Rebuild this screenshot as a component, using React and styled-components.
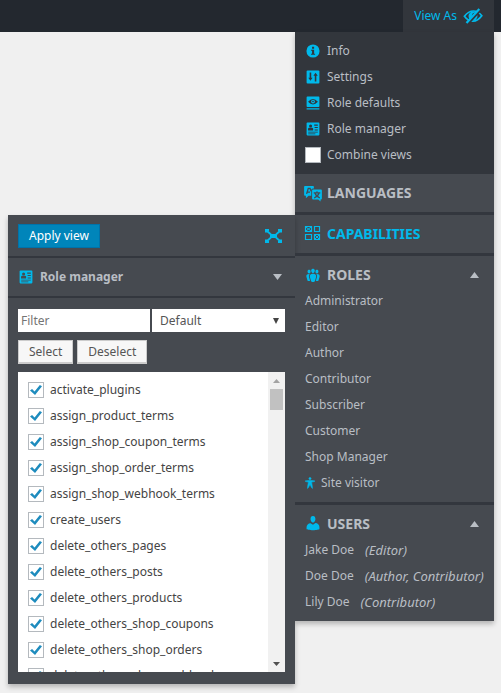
import React from "react";
import styled, { createGlobalStyle, css } from "styled-components";

const color = {
  bar: "#23282f",
  dark: "#32363c",
  panel: "#464a50",
  line: "#33373e",
  text: "#b9bec4",
  accent: "#00b9eb",
  white: "#ffffff",
};

const GlobalStyle = createGlobalStyle`
  *, *::before, *::after { box-sizing: border-box; }
  body {
    margin: 0;
    min-height: 100vh;
    background: #f0f0f0;
    font-family: "Noto Sans", "Open Sans", sans-serif;
    font-size: 12px;
    line-height: 26px;
    color: ${color.text};
  }
  button, input, select { font: inherit; }
`;

const TopBar = styled.header`
  display: flex;
  justify-content: flex-end;
  height: 32px;
  padding-right: 7px;
  background: ${color.bar};
`;

const ViewAsButton = styled.button`
  display: flex;
  align-items: center;
  gap: 6px;
  padding: 0 11px;
  border: 0;
  background: ${color.dark};
  color: ${color.accent};
  white-space: nowrap;
`;

const Main = styled.main`
  display: flex;
  justify-content: flex-end;
  align-items: flex-start;
  padding: 0 7px 72px 8px;
`;

const Menu = styled.nav`
  flex: 0 0 199px;
  min-width: 0;
  background: ${color.panel};
  box-shadow: 0 3px 5px rgba(0, 0, 0, 0.25);
`;

const Section = styled.section`
  position: relative;
  padding: 6px 10px;
  background: ${(p) => (p.$dark ? color.dark : color.panel)};
  border-top: ${(p) => (p.$ruled ? `3px solid ${color.line}` : "0")};
`;

const rowStyle = css`
  display: flex;
  align-items: center;
  gap: ${(p) => p.$gap || 6}px;
  height: 26px;
  white-space: nowrap;
  color: ${color.text};
  text-decoration: none;
`;

const MenuLink = styled.a`
  ${rowStyle}
`;

const MenuLabel = styled.label`
  ${rowStyle}
`;

const HeadingButton = styled.button`
  ${rowStyle}
  width: 100%;
  padding: 0 5px 0 0;
  border: 0;
  background: none;
  text-align: left;
  font-size: ${(p) => (p.$small ? 12 : 14)}px;
  font-weight: 700;
  color: ${(p) => (p.$active ? color.accent : color.text)};
`;

const HeadingText = styled.span`
  flex: 1;
`;

const UserRole = styled.em`
  font-size: 13px;
  font-style: italic;
`;

const Icon = styled.svg`
  flex: none;
  display: block;
  width: ${(p) => p.$w || 16}px;
  height: ${(p) => p.$h || p.$w || 16}px;
  overflow: visible;
  fill: ${(p) => p.$fill || color.accent};
`;

const CheckBox = styled.input.attrs({ type: "checkbox" })`
  flex: none;
  appearance: none;
  display: grid;
  place-items: center;
  width: 16px;
  height: 16px;
  margin: 0;
  border: 1px solid #b4b9be;
  background: ${color.white};
  &:checked::before {
    content: "";
    width: 12px;
    height: 10px;
    background: #1e8cbe;
    clip-path: polygon(0 54%, 17% 40%, 38% 66%, 82% 0, 100% 12%, 42% 100%);
  }
`;

const Flyout = styled.div`
  position: absolute;
  top: 0;
  right: 100%;
  width: 287px;
  background: ${color.panel};
  box-shadow: 0 3px 5px rgba(0, 0, 0, 0.25);
`;

const FlyoutBar = styled.div`
  display: flex;
  align-items: center;
  justify-content: space-between;
  height: ${(p) => p.$height}px;
  padding: 0 13px 0 10px;
  border-bottom: 2px solid ${color.line};
`;

const ApplyButton = styled.button`
  height: 24px;
  padding: 0 10px;
  border: 1px solid #0073aa;
  background: #0085ba;
  color: ${color.white};
  line-height: 20px;
`;

const IconButton = styled.button`
  display: flex;
  padding: 0;
  border: 0;
  background: none;
`;

const FlyoutBody = styled.div`
  display: grid;
  gap: 8px;
  padding: 11px 10px 12px;
`;

const Fields = styled.div`
  display: grid;
  grid-template-columns: 132px 1fr;
  gap: 2px;
`;

const FilterInput = styled.input`
  min-width: 0;
  height: 23px;
  padding: 0 3px;
  border: 0;
  background: ${color.white};
  color: #444;
  &::placeholder { color: #757575; opacity: 1; }
`;

const SelectWrap = styled.div`
  display: grid;
  grid-template-columns: 1fr;
  align-items: center;
  background: ${color.white};
  & > * { grid-area: 1 / 1; }
  & > svg { justify-self: end; margin-right: 6px; pointer-events: none; }
`;

const RoleSelect = styled.select`
  appearance: none;
  width: 100%;
  height: 23px;
  padding: 0 8px;
  border: 0;
  background: transparent;
  color: #555;
  line-height: 20px;
`;

const ButtonRow = styled.div`
  display: flex;
  gap: 4px;
`;

const PlainButton = styled.button`
  height: 24px;
  padding: 0 10px;
  border: 1px solid #ccc;
  border-bottom-width: 2px;
  background: #f7f7f7;
  color: #555;
  line-height: 20px;
`;

const ListBox = styled.div`
  display: flex;
  height: 300px;
  background: ${color.white};
`;

const CapabilityList = styled.ul`
  flex: 1;
  margin: 0;
  padding: 5px 10px;
  list-style: none;
  overflow-y: auto;
  scrollbar-width: none;
`;

const CapabilityLabel = styled.label`
  ${rowStyle}
  color: #444;
`;

const ScrollTrack = styled.div`
  display: flex;
  flex-direction: column;
  align-items: center;
  width: 17px;
  background: #f1f1f1;
`;

const ScrollArrow = styled.div`
  display: grid;
  place-items: center;
  height: 17px;
`;

const ScrollThumb = styled.div`
  width: 13px;
  height: 21px;
  margin-bottom: auto;
  background: #c1c1c1;
`;

const Triangle = ({ down, w = 9, h = 6, fill = color.text }) => (
  <Icon viewBox="0 0 10 8" preserveAspectRatio="none" $w={w} $h={h} $fill={fill} aria-hidden="true">
    <path d={down ? "M0 0H10L5 8Z" : "M0 8H10L5 0Z"} />
  </Icon>
);

const HiddenEyeIcon = () => (
  <Icon viewBox="0 0 20 20" $w={20} aria-hidden="true">
    <path
      d="M1.4 10.3Q5.4 5 10.4 5Q15.4 5 18.8 9.8Q14.8 15.2 10 15.2Q5 15.2 1.4 10.3Z"
      fill="none"
      stroke={color.accent}
      strokeWidth="1.7"
    />
    <path d="M10 5.6A4.5 4.5 0 1 0 10 14.6A4.5 4.5 0 1 0 10 5.6Z" />
    <path d="M9.4 9.8Q9.7 7.5 11.8 7.2" fill="none" stroke={color.dark} strokeWidth="1.3" />
    <path d="M4.8 17.6L17 3.9" stroke={color.dark} strokeWidth="3" />
    <path d="M3.5 17L16.3 3" stroke={color.accent} strokeWidth="2.2" />
  </Icon>
);

const InfoIcon = () => (
  <Icon viewBox="0 0 20 20" aria-hidden="true">
    <circle cx="10" cy="10" r="8.2" />
    <path d="M8.8 4.8h2.6v2.4H8.8zM7.6 8.4h3.8v5h1.2v1.4H7.6v-1.4h1.2V9.8H7.6z" fill={color.dark} />
  </Icon>
);

const SettingsIcon = () => (
  <Icon viewBox="0 0 20 20" aria-hidden="true">
    <path d="M3.2 2h13.6q1.2 0 1.2 1.2v13.6q0 1.2-1.2 1.2H3.2Q2 18 2 16.8V3.2Q2 2 3.2 2z" />
    <path d="M5.8 4.5h2V11h1.7L6.8 14.8 4.1 11h1.7zM12.2 15.5h2V8.5h1.7L13.2 4.7 10.5 8.5h1.7z" fill={color.dark} />
  </Icon>
);

const DefaultsIcon = () => (
  <Icon viewBox="0 0 20 20" aria-hidden="true">
    <path d="M3 2h14q1 0 1 1v11q0 1-1 1H3q-1 0-1-1V3q0-1 1-1zM2 16.6h16V18H2z" />
    <path d="M3.8 8.5Q10 1.6 16.2 8.5Q10 15 3.8 8.5z" fill={color.dark} />
    <circle cx="10" cy="8.2" r="2.4" />
    <circle cx="10" cy="8.2" r="1" fill={color.dark} />
  </Icon>
);

const ManagerIcon = ({ bg = color.dark }) => (
  <Icon viewBox="0 0 20 20" aria-hidden="true">
    <path d="M3 2h14q1 0 1 1v14q0 1-1 1H3q-1 0-1-1V3q0-1 1-1z" />
    <g fill={bg}>
      <circle cx="7" cy="6.2" r="1.9" />
      <path d="M3.8 11.8V9.6q0-1.2 1.6-1.2h3.2q1.6 0 1.6 1.2v2.2z" />
      <path d="M11.5 4.5H16v1.3h-4.5zM12 7.5h4v1.3h-4zM12 10.5h4v1.3h-4zM4 13.3h12v1.2H4zM4 15.6h9v1H4z" />
    </g>
  </Icon>
);

const LanguagesIcon = () => (
  <Icon viewBox="1 0 18 18" aria-hidden="true">
    <path d="M1 1h9q1 0 1 1v2h-1Q8 4 8 6v6H5l-3 3v-3H1q-1 0-1-1V2q0-1 1-1z" />
    <path d="M2.8 10L4.7 3.8h2L8 7M3.6 8h3" fill="none" stroke={color.panel} strokeWidth="1.5" />
    <path d="M10 5.2h9q1 0 1 1v9q0 1-1 1h-.5v2.3l-2.5-2.3H10q-1 0-1-1v-9q0-1 1-1z" />
    <path d="M10.8 8.8h7.4M14.5 7v1.8M16.8 9q-1 3.6-5.5 5.6M12.2 9q1 3.6 5.5 5.6" fill="none" stroke={color.panel} strokeWidth="1.3" />
  </Icon>
);

const CapabilitiesIcon = () => (
  <Icon viewBox="0 0 16 16" aria-hidden="true">
    <g fill="none" stroke={color.accent}>
      <path d="M0.5 0.5h6v5h-6zM9.5 0.5h5v5h-5zM0.5 8.5h6v5h-6zM9.5 8.5h5v5h-5z" strokeWidth="1.2" />
      <path d="M1 1l5 4M6 1L1 5M10 9l4 4M14 9l-4 4" />
    </g>
  </Icon>
);

const RolesIcon = () => (
  <Icon viewBox="1 1 18 18" aria-hidden="true">
    <path d="M8.03 4.46c-.29 1.28.55 3.46 1.97 3.46 1.41 0 2.25-2.18 1.96-3.46-.22-.98-1.08-1.63-1.96-1.63-.89 0-1.74.65-1.97 1.63zm-4.13.9c-.25 1.08.47 2.93 1.67 2.93s1.92-1.85 1.67-2.93c-.19-.83-.92-1.39-1.67-1.39s-1.48.56-1.67 1.39zm8.86 0c-.25 1.08.47 2.93 1.66 2.93 1.2 0 1.92-1.85 1.67-2.93-.19-.83-.92-1.39-1.67-1.39-.74 0-1.47.56-1.66 1.39zm-.59 11.43l1.25-4.3C14.2 10 12.71 8.47 10 8.47c-2.72 0-4.21 1.53-3.44 4.02l1.26 4.3C8.05 17.51 9 18 10 18c.98 0 1.94-.49 2.17-1.21zm-6.1-7.63c-.49.67-.96 1.83-.42 3.59l1.12 3.79c-.34.2-.77.31-1.2.31-.85 0-1.65-.41-1.85-1.03l-1.07-3.65c-.65-2.11.61-3.4 2.92-3.4.27 0 .54.02.79.06-.1.1-.2.22-.29.33zm8.35-.39c2.31 0 3.58 1.29 2.92 3.4l-1.07 3.65c-.2.62-1 1.03-1.85 1.03-.43 0-.86-.11-1.2-.31l1.11-3.77c.55-1.78.08-2.94-.42-3.61-.08-.11-.18-.23-.28-.33.25-.04.51-.06.79-.06z" />
  </Icon>
);

const UsersIcon = () => (
  <Icon viewBox="1 2 18 18" aria-hidden="true">
    <path d="M10 9.25c-2.27 0-2.73-3.44-2.73-3.44C7 4.02 7.82 2 9.97 2c2.16 0 2.98 2.02 2.71 3.81 0 0-.41 3.44-2.68 3.44zm0 2.57L12.72 10c2.39 0 4.52 2.33 4.52 4.53v2.49s-3.65 1.13-7.24 1.13c-3.65 0-7.24-1.13-7.24-1.13v-2.49c0-2.25 1.94-4.48 4.47-4.48z" />
  </Icon>
);

const VisitorIcon = () => (
  <Icon viewBox="3.4 2.4 13.2 15" $w={10} $h={12} aria-hidden="true">
    <path
      stroke={color.accent}
      strokeWidth="0.7"
      d="M10 2.6c.83 0 1.5.67 1.5 1.5s-.67 1.51-1.5 1.51c-.82 0-1.5-.68-1.5-1.51s.68-1.5 1.5-1.5zM3.4 7.36c0-.65 6.6-.76 6.6-.76s6.6.11 6.6.76-4.47 1.4-4.47 1.4 1.69 8.14 1.06 8.38c-.62.24-3.19-5.19-3.19-5.19s-2.56 5.43-3.18 5.19c-.63-.24 1.06-8.38 1.06-8.38S3.4 8.01 3.4 7.36z"
    />
  </Icon>
);

const ExpandIcon = () => (
  <Icon viewBox="0 0 17 14" $w={17} $h={14} aria-hidden="true">
    <path d="M5 5h7v4H5zM0 0h4v2H2.5V3.5H0zM13 0h4v3.5h-2.5V2H13zM0 10.5h2.5V12H4v2H0zM14.5 10.5H17V14h-4v-2h1.5z" />
    <path d="M1.5 1.5L6 5.5M15.5 1.5L11 5.5M1.5 12.5L6 8.5M15.5 12.5L11 8.5" stroke={color.accent} strokeWidth="1.7" />
  </Icon>
);

const roles = ["Administrator", "Editor", "Author", "Contributor", "Subscriber", "Customer", "Shop Manager"];

const users = [
  ["Jake Doe", "(Editor)"],
  ["Doe Doe", "(Author, Contributor)"],
  ["Lily Doe", "(Contributor)"],
];

const capabilities = [
  "activate_plugins",
  "assign_product_terms",
  "assign_shop_coupon_terms",
  "assign_shop_order_terms",
  "assign_shop_webhook_terms",
  "create_users",
  "delete_others_pages",
  "delete_others_posts",
  "delete_others_products",
  "delete_others_shop_coupons",
  "delete_others_shop_orders",
  "delete_others_shop_webhooks",
];

const CapabilitiesFlyout = () => (
  <Flyout>
    <FlyoutBar $height={43}>
      <ApplyButton type="button">Apply view</ApplyButton>
      <IconButton type="button" aria-label="Expand">
        <ExpandIcon />
      </IconButton>
    </FlyoutBar>
    <FlyoutBar $height={40}>
      <HeadingButton type="button" $small>
        <ManagerIcon bg={color.panel} />
        <HeadingText>Role manager</HeadingText>
      </HeadingButton>
      <Triangle down />
    </FlyoutBar>
    <FlyoutBody>
      <Fields>
        <FilterInput type="text" placeholder="Filter" aria-label="Filter capabilities" />
        <SelectWrap>
          <RoleSelect aria-label="Role" defaultValue="Default">
            <option>Default</option>
          </RoleSelect>
          <Triangle down w={6} h={6} fill="#444" />
        </SelectWrap>
      </Fields>
      <ButtonRow>
        <PlainButton type="button">Select</PlainButton>
        <PlainButton type="button">Deselect</PlainButton>
      </ButtonRow>
      <ListBox>
        <CapabilityList>
          {capabilities.map((name) => (
            <li key={name}>
              <CapabilityLabel>
                <CheckBox defaultChecked />
                {name}
              </CapabilityLabel>
            </li>
          ))}
        </CapabilityList>
        <ScrollTrack aria-hidden="true">
          <ScrollArrow>
            <Triangle w={7} h={4} fill="#a3a3a3" />
          </ScrollArrow>
          <ScrollThumb />
          <ScrollArrow>
            <Triangle down w={7} h={4} fill="#505050" />
          </ScrollArrow>
        </ScrollTrack>
      </ListBox>
    </FlyoutBody>
  </Flyout>
);

export default function App() {
  return (
    <>
      <GlobalStyle />
      <TopBar>
        <ViewAsButton type="button">
          View As
          <HiddenEyeIcon />
        </ViewAsButton>
      </TopBar>
      <Main>
        <Menu aria-label="View as">
          <Section $dark>
            <MenuLink href="#info"><InfoIcon />Info</MenuLink>
            <MenuLink href="#settings"><SettingsIcon />Settings</MenuLink>
            <MenuLink href="#role-defaults"><DefaultsIcon />Role defaults</MenuLink>
            <MenuLink href="#role-manager"><ManagerIcon />Role manager</MenuLink>
            <MenuLabel><CheckBox />Combine views</MenuLabel>
          </Section>
          <Section>
            <HeadingButton type="button"><LanguagesIcon />LANGUAGES</HeadingButton>
          </Section>
          <Section $ruled>
            <HeadingButton type="button" $active><CapabilitiesIcon />CAPABILITIES</HeadingButton>
            <CapabilitiesFlyout />
          </Section>
          <Section $ruled>
            <HeadingButton type="button">
              <RolesIcon />
              <HeadingText>ROLES</HeadingText>
              <Triangle />
            </HeadingButton>
            {roles.map((role) => (
              <MenuLink key={role} href={`#${role}`}>{role}</MenuLink>
            ))}
            <MenuLink href="#visitor"><VisitorIcon />Site visitor</MenuLink>
          </Section>
          <Section $ruled>
            <HeadingButton type="button">
              <UsersIcon />
              <HeadingText>USERS</HeadingText>
              <Triangle />
            </HeadingButton>
            {users.map(([name, role]) => (
              <MenuLink key={name} href={`#${name}`} $gap={11}>
                {name}
                <UserRole>{role}</UserRole>
              </MenuLink>
            ))}
          </Section>
        </Menu>
      </Main>
    </>
  );
}
